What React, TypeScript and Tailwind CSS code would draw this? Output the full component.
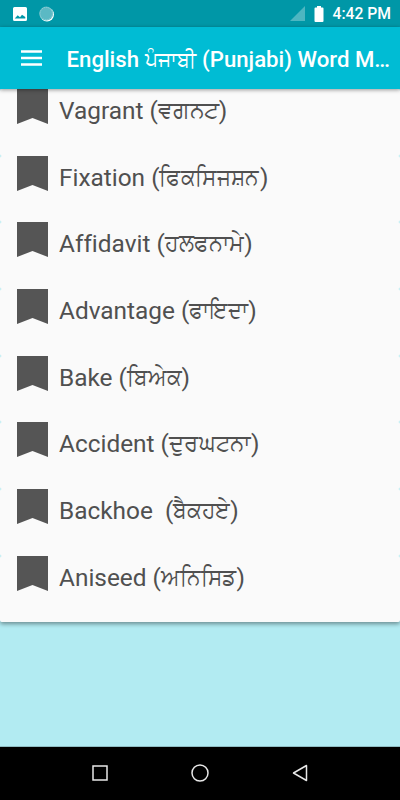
import React from "react";

interface Word {
  english: string;
  punjabi: string;
  width: number;
  scale: number;
}

const words: Word[] = [
  { english: "Vagrant ", punjabi: "ਵਗਨਟ", width: 61, scale: 0.985 },
  { english: "Fixation ", punjabi: "ਫਿਕਸਿਜਸ਼ਨ", width: 100.5, scale: 0.9 },
  { english: "Affidavit ", punjabi: "ਹਲਫਨਾਮੇ", width: 79.5, scale: 0.93 },
  { english: "Advantage ", punjabi: "ਫਾਇਦਾ", width: 59, scale: 0.88 },
  { english: "Bake ", punjabi: "ਬਿਅੇਕ", width: 54.5, scale: 0.9 },
  { english: "Accident ", punjabi: "ਦੁਰਘਟਨਾ", width: 82, scale: 0.955 },
  { english: "Backhoe  ", punjabi: "ਬੈਕਹਏ", width: 57, scale: 0.92 },
  { english: "Aniseed ", punjabi: "ਅਨਿਸਿਡ", width: 75.5, scale: 0.9 },
];

function StatusBar() {
  return (
    <div className="flex h-[27px] shrink-0 items-center bg-[#0097a7] pl-[13px] pr-[9px] text-white">
      <svg width="14" height="14" viewBox="0 0 14 14">
        <path
          fill="white"
          fillRule="evenodd"
          d="M1.500 0h11Q14 0 14 1.500v11Q14 14 12.500 14h-11Q0 14 0 12.500v-11Q0 0 1.500 0zM1.700 11.500h10.600V10L9 7.800 7 10.200 4.700 8.300z"
        />
      </svg>
      <svg className="ml-3" width="15" height="16" viewBox="0 0 15 16">
        <circle cx="8" cy="8.500" r="7" fill="white" />
        <circle cx="7.200" cy="7.600" r="7" fill="#5bb9c4" />
        <circle cx="7.200" cy="7.600" r="6.200" fill="none" stroke="#a4d7dd" strokeDasharray="1 1" />
      </svg>
      <svg className="ml-auto" width="15" height="15" viewBox="0 0 15 15">
        <path d="M15 0v15H0z" fill="#4db6c1" />
      </svg>
      <svg className="ml-[9.500px]" width="10" height="16" viewBox="0 0 10 16">
        <path d="M3 0h4v1.600h1.500q1 0 1 1V15q0 1-1 1h-7q-1 0-1-1V2.600q0-1 1-1H3z" fill="white" />
      </svg>
      <span className="ml-[8px] mt-px text-[15.700px] font-medium leading-none">4:42 PM</span>
    </div>
  );
}

function AppBar() {
  return (
    <header className="relative z-10 flex h-[62px] shrink-0 items-center bg-[#00bcd4] pl-[21px] text-white shadow-[0_1px_4px_rgba(0,0,0,0.4)]">
      <svg width="21" height="16" viewBox="0 0 21 16">
        <path d="M0 1.500h21M0 8h21M0 14.500h21" stroke="white" strokeWidth="2.300" />
      </svg>
      <h1 className="ml-[24.500px] mt-[2px] whitespace-nowrap text-[22.200px] font-medium leading-none">
        English{" "}
        <span className="inline-block w-[52px] origin-left scale-x-[0.930]">ਪੰਜਾਬੀ</span>{" "}
        (Punjabi) Word M…
      </h1>
    </header>
  );
}

function WordCard({ english, punjabi, width, scale }: Word) {
  return (
    <li className="flex h-[66.660px] rounded-[2px] bg-[#fafafa] pl-[17px]">
      <svg width="31" height="36" viewBox="0 0 31 36">
        <path d="M0 0h31v35l-15.500-6L0 35z" fill="#555" />
      </svg>
      <span className="ml-[11px] mt-[8px] whitespace-pre text-[24.400px] leading-[28px] text-[#505050] [font-variant-ligatures:none]">
        {english}(
        <span
          className="inline-block origin-left -translate-y-px text-[24px]"
          style={{ width, transform: `scaleX(${scale})` }}
        >
          {punjabi}
        </span>
        )
      </span>
    </li>
  );
}

function NavBar() {
  return (
    <nav className="flex h-[54px] shrink-0 items-center justify-between border-t border-[#8fbcc2] bg-black pb-px pl-[92px] pr-[92px]">
      <svg width="16" height="16" viewBox="0 0 16 16" fill="none" stroke="#e8e8e8" strokeWidth="1.500">
        <path d="M1 1h14v14H1z" />
      </svg>
      <svg width="18" height="18" viewBox="0 0 18 18" fill="none" stroke="#e8e8e8" strokeWidth="1.500">
        <circle cx="9" cy="9" r="8" />
      </svg>
      <svg width="16" height="18" viewBox="0 0 16 18" fill="none" stroke="#e8e8e8" strokeWidth="1.500">
        <path d="M14.500 1.500v15L1.500 9z" strokeLinejoin="round" />
      </svg>
    </nav>
  );
}

export default function App() {
  return (
    <div className="flex h-[800px] w-[400px] flex-col overflow-hidden bg-[#b2ebf2] font-['Roboto','Noto_Sans',sans-serif]">
      <StatusBar />
      <AppBar />
      <main className="flex-1">
        <ul className="rounded-b-[2px] shadow-[0_2px_4px_rgba(0,0,0,0.4)]">
          {words.map((word) => (
            <WordCard key={word.english} {...word} />
          ))}
        </ul>
      </main>
      <NavBar />
    </div>
  );
}
